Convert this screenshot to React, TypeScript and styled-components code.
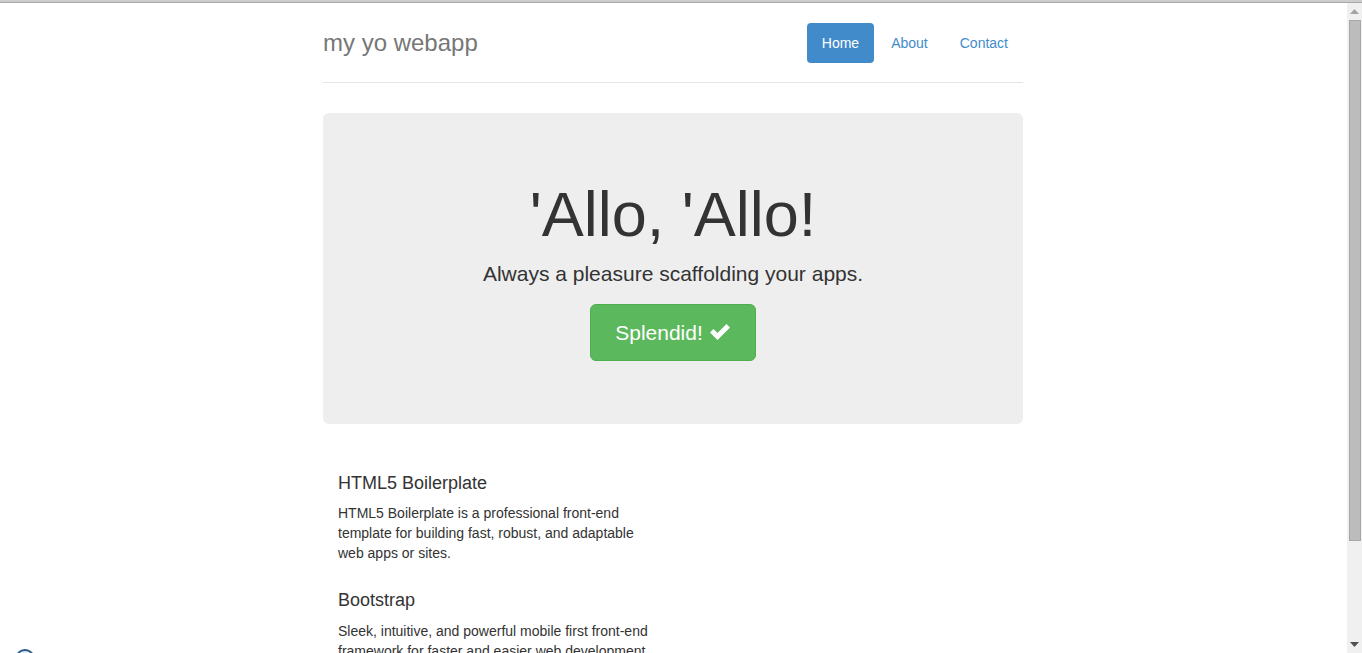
import React from "react";
import styled, { createGlobalStyle } from "styled-components";

const GlobalStyle = createGlobalStyle`
  html, body {
    margin: 0;
    padding: 0;
    height: 100%;
    overflow: hidden;
    background: #fff;
  }
  body {
    font-family: "Liberation Sans", Arial, Helvetica, sans-serif;
    font-size: 14px;
    line-height: 1.42857143;
    color: #333;
  }
  * { box-sizing: border-box; }
`;

const Frame = styled.div`
  display: flex;
  flex-direction: column;
  height: 100vh;
`;

const TopBar = styled.div`
  flex: 0 0 3px;
  background: #cdcdcd;
  border-bottom: 1px solid #a9a9a9;
`;

const Window = styled.div`
  flex: 1 1 auto;
  display: flex;
  min-height: 0;
`;

const Viewport = styled.div`
  flex: 1 1 auto;
  overflow: hidden;
`;

const ScrollBar = styled.div`
  flex: 0 0 16px;
  display: flex;
  flex-direction: column;
  background: #f0f0f0;
  border-left: 1px solid #fff;
`;

const ScrollButton = styled.div`
  flex: 0 0 17px;
  display: flex;
  align-items: center;
  justify-content: center;
`;

const ScrollTrack = styled.div`
  flex: 1 1 auto;
  display: flex;
  flex-direction: column;
  padding: 0 1px 0 2px;
`;

const ScrollThumb = styled.div`
  flex: 0 0 521px;
  background: #bcbcbc;
  border: 1px solid #a8a8a8;
`;

const Page = styled.div`
  padding: 20px 0;
`;

const Container = styled.div`
  max-width: 730px;
  margin: 0 auto;
  padding: 0 15px;
`;

const Header = styled.header`
  display: flex;
  justify-content: space-between;
  align-items: flex-start;
  border-bottom: 1px solid #e5e5e5;
  margin-bottom: 30px;
`;

const Brand = styled.h3`
  margin: 0;
  padding-bottom: 19px;
  font-size: 24px;
  line-height: 40px;
  font-weight: 500;
  color: #777;
`;

const Nav = styled.ul`
  display: flex;
  gap: 2px;
  list-style: none;
  margin: 0;
  padding: 0;
`;

const PillLink = styled.a<{ $active?: boolean }>`
  display: block;
  padding: 10px 15px;
  border-radius: 4px;
  line-height: 20px;
  text-decoration: none;
  color: ${(p) => (p.$active ? "#fff" : "#428bca")};
  background: ${(p) => (p.$active ? "#428bca" : "transparent")};
`;

const Jumbotron = styled.section`
  padding: 48px 60px;
  margin-bottom: 30px;
  background: #eee;
  border-radius: 6px;
  text-align: center;
`;

const Title = styled.h1`
  margin: 19px 0 10px;
  font-size: 63px;
  line-height: 1.1;
  font-weight: 500;
  color: #333;
`;

const Lead = styled.p`
  margin: 0 0 15px;
  font-size: 21px;
  line-height: 1.4;
  font-weight: 300;
`;

const ButtonRow = styled.div`
  display: flex;
  justify-content: center;
  margin: 0 0 15px;
`;

const SuccessButton = styled.a`
  display: flex;
  align-items: center;
  gap: 6px;
  padding: 14px 24px;
  font-size: 21px;
  line-height: 27px;
  color: #fff;
  background: #5cb85c;
  border: 1px solid #4cae4c;
  border-radius: 6px;
  text-decoration: none;
`;

const CheckIcon = styled.svg`
  width: 22px;
  height: 22px;
  display: block;
  margin-top: -1px;
`;

const Marketing = styled.div`
  display: flex;
  margin: 40px 0;
`;

const Column = styled.div`
  width: 50%;
  padding: 0 15px;
`;

const Heading = styled.h4`
  margin: 10px 0;
  font-size: 18px;
  line-height: 1.1;
  font-weight: 500;
  color: #333;

  p + & {
    margin-top: 28px;
  }
`;

const Text = styled.p`
  margin: 0 0 10px;
`;

const Footer = styled.footer`
  padding-top: 19px;
  color: #777;
  border-top: 1px solid #e5e5e5;
`;

const Badge = styled.div`
  position: fixed;
  left: 15px;
  top: 649px;
  width: 20px;
  height: 20px;
  border-radius: 50%;
  border: 2px solid #2b5a87;
  background: #e8eef5;
`;

export default function App() {
  return (
    <>
      <GlobalStyle />
      <Frame>
        <TopBar />
        <Window>
          <Viewport>
            <Page>
              <Container>
                <Header>
                  <Brand>my yo webapp</Brand>
                  <Nav>
                    <li>
                      <PillLink href="#" $active>
                        Home
                      </PillLink>
                    </li>
                    <li>
                      <PillLink href="#">About</PillLink>
                    </li>
                    <li>
                      <PillLink href="#">Contact</PillLink>
                    </li>
                  </Nav>
                </Header>

                <Jumbotron>
                  <Title>'Allo, 'Allo!</Title>
                  <Lead>Always a pleasure scaffolding your apps.</Lead>
                  <ButtonRow>
                    <SuccessButton href="#">
                      Splendid!
                      <CheckIcon viewBox="0 0 22 22" aria-hidden="true">
                        <polygon
                          points="1,11.5 4.5,8 8.5,12 17.5,3 21,6.5 8.5,19"
                          fill="#fff"
                        />
                      </CheckIcon>
                    </SuccessButton>
                  </ButtonRow>
                </Jumbotron>

                <Marketing>
                  <Column>
                    <Heading>HTML5 Boilerplate</Heading>
                    <Text>
                      HTML5 Boilerplate is a professional front-end template
                      for building fast, robust, and adaptable web apps or
                      sites.
                    </Text>
                    <Heading>Bootstrap</Heading>
                    <Text>
                      Sleek, intuitive, and powerful mobile first front-end
                      framework for faster and easier web development.
                    </Text>
                  </Column>
                </Marketing>

                <Footer>
                  <Text>♥ from the Yeoman team</Text>
                </Footer>
              </Container>
            </Page>
          </Viewport>
          <ScrollBar aria-hidden="true">
            <ScrollButton>
              <svg width="9" height="5" viewBox="0 0 9 5">
                <polygon points="0,5 4.5,0 9,5" fill="#a3a3a3" />
              </svg>
            </ScrollButton>
            <ScrollTrack>
              <ScrollThumb />
            </ScrollTrack>
            <ScrollButton>
              <svg width="9" height="5" viewBox="0 0 9 5">
                <polygon points="0,0 9,0 4.5,5" fill="#505050" />
              </svg>
            </ScrollButton>
          </ScrollBar>
        </Window>
      </Frame>
      <Badge />
    </>
  );
}
